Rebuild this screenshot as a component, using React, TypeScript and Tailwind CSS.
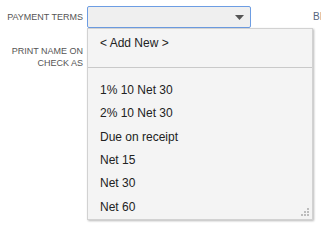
import { useState } from "react";

const terms = ["1% 10 Net 30", "2% 10 Net 30", "Due on receipt", "Net 15", "Net 30", "Net 60"];

function Grip() {
  return (
    <svg width="8" height="8" viewBox="0 0 8 8" className="absolute right-[3px] bottom-[3px]">
      <rect x="6" y="0" width="2" height="2" fill="#bdbdbd" />
      <rect x="3" y="3" width="2" height="2" fill="#bdbdbd" />
      <rect x="6" y="3" width="2" height="2" fill="#bdbdbd" />
      <rect x="0" y="6" width="2" height="2" fill="#bdbdbd" />
      <rect x="3" y="6" width="2" height="2" fill="#bdbdbd" />
      <rect x="6" y="6" width="2" height="2" fill="#bdbdbd" />
    </svg>
  );
}

export default function App() {
  const [selected, setSelected] = useState<string | null>(null);

  return (
    <div className="relative w-[321px] h-[234px] overflow-hidden bg-white font-['Liberation_Sans',Arial,sans-serif]">
      <div className="flex items-start pt-[6px]">
        {/* Labels */}
        <div className="w-[87px] shrink-0 pr-[4px] text-right text-[9px] text-[#555555] uppercase">
          <div className="h-[22px] leading-[22px]">Payment Terms</div>
          <div className="mt-[18px] leading-[11.5px]">
            Print name on
            <br />
            check as
          </div>
        </div>

        {/* Select + dropdown */}
        <div className="relative w-[164px] h-[22px] shrink-0">
          <div className="flex items-center h-[22px] rounded-[2px] border border-[#6d9de3] bg-[#efefef] pr-[6px]">
            <span className="text-[12px] text-[#222] flex-1 pl-[4px]">{selected}</span>
            <svg width="9" height="5" viewBox="0 0 9 5">
              <path d="M0 0h9L4.5 5z" fill="#555555" />
            </svg>
          </div>

          <div className="absolute left-0 top-full z-10 w-[226px] h-[192px] border border-[#d2d2d2] bg-[#f4f4f4] pt-[3px] shadow-[1px_1px_2px_rgba(0,0,0,0.28)] text-[12px] text-[#222222]">
            <div className="h-[23.4px] leading-[23.4px] px-[12px]" onClick={() => setSelected(null)}>
              &lt; Add New &gt;
            </div>
            <div className="h-[23.4px] flex items-center">
              <div className="w-full h-px bg-[#c9c9c9]" />
            </div>
            {terms.map((t) => (
              <div
                key={t}
                className="h-[23.4px] leading-[23.4px] px-[12px] cursor-pointer"
                onClick={() => setSelected(t)}
              >
                {t}
              </div>
            ))}
            <Grip />
          </div>
        </div>

        <div className="ml-[62px] h-[22px] leading-[22px] text-[10px] text-[#56657d] whitespace-nowrap">BI</div>
      </div>
    </div>
  );
}
